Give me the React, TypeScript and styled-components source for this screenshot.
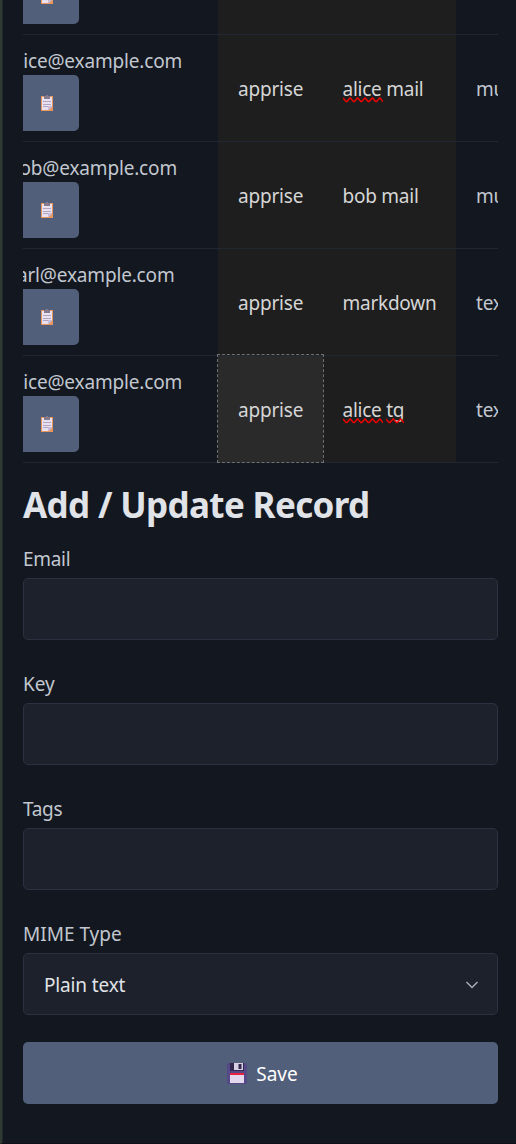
import React from "react";
import styled, { createGlobalStyle, css } from "styled-components";

const GlobalStyle = createGlobalStyle`
  * { box-sizing: border-box; }
  body {
    margin: 0;
    background: #13171f;
    color: #c2c7d0;
    font-family: "Noto Sans", "Open Sans", sans-serif;
    font-size: 19px;
    line-height: 30px;
    overflow: hidden;
  }
`;

const Page = styled.div`
  height: 1144px;
  overflow: hidden;
  border-left: 2px solid #2f3b30;
  border-bottom: 1px solid #11101a;
  box-shadow: inset 1px 0 0 #20282a;
  padding: 0 18px 0 21px;
`;

const TableScroller = styled.div`
  height: 463px;
  overflow: hidden;
  display: flex;
  flex-direction: column;
  justify-content: flex-end;
`;

const Table = styled.div`
  width: 620px;
  margin-left: -35px;
  border-bottom: 1px solid #202632;
`;

const Row = styled.div`
  display: grid;
  grid-template-columns: 230px 105px 133px 152px;
  height: 107px;
`;

const cellBase = css`
  border-top: 1px solid #202632;
  padding: 11px 20px 9px;
  white-space: nowrap;
  letter-spacing: -0.2px;
`;

const EmailCell = styled.div`
  ${cellBase}
`;

const EmailText = styled.div`
  height: 29px;
  letter-spacing: -0.17px;
`;

const Cell = styled.div<{ $editable?: boolean; $hover?: boolean }>`
  ${cellBase}
  display: flex;
  align-items: center;
  ${(p) => p.$editable && css`background: #1e1e1e; color: #d6d6d6;`}
  ${(p) =>
    p.$hover &&
    css`
      background: #2a2a2a;
      outline: 1px dashed #707070;
      z-index: 1;
    `}
`;

const TagText = styled.span`
  margin-left: -0.5px;
  letter-spacing: -0.25px;
`;

const CopyButton = styled.button`
  display: flex;
  align-items: center;
  justify-content: center;
  width: 71px;
  height: 56px;
  padding: 0 0 0 7px;
  border: 0;
  border-radius: 5px;
  background: #525f7a;
`;

const Misspelled = styled.span`
  position: relative;
`;

const Squiggle = styled.svg`
  position: absolute;
  left: 0;
  top: 21px;
  overflow: hidden;
`;

const Heading = styled.h2`
  margin: 20px 0 17px;
  color: #e0e3e7;
  font-size: 35px;
  font-weight: 700;
  line-height: 44px;
  letter-spacing: -0.65px;
  white-space: nowrap;
`;

const Field = styled.label<{ $tracking?: number }>`
  display: block;
  height: 125px;
  letter-spacing: ${(p) => p.$tracking ?? 0}px;
`;

const controlBox = css`
  width: 100%;
  height: 62px;
  margin-top: 4px;
  border: 1px solid #2a3140;
  border-radius: 5px;
  background: #1c212c;
`;

const Input = styled.input`
  ${controlBox}
  display: block;
  padding: 0 20px;
  color: #e0e3e7;
  font: inherit;
`;

const Select = styled.div`
  ${controlBox}
  display: flex;
  align-items: center;
  justify-content: space-between;
  padding: 2px 18px 0 20px;
  color: #e0e3e7;
  letter-spacing: -0.15px;

  svg {
    margin-bottom: 1px;
  }
`;

const SaveButton = styled.button`
  display: flex;
  align-items: center;
  justify-content: center;
  gap: 9px;
  width: 100%;
  height: 62px;
  margin-top: -2px;
  padding: 2px 0 0 4px;
  border: 0;
  border-radius: 5px;
  background: #525f7a;
  color: #fff;
  font: inherit;

  svg {
    margin-bottom: 1px;
  }
`;

const Clipboard = () => (
  <svg width="12" height="16" viewBox="0 0 12 16">
    <path d="M0 1h12v15H0z" fill="#e8965c" />
    <path d="M1 2h10v9l-4 4H1z" fill="#e9e1f2" />
    <path d="M11 11v1l-3 3H7v-4z" fill="#c9bcd8" />
    <path d="M3 1h2V0h2v1h2v3H3z" fill="#857c8f" />
    <path d="M2 6.500h8M2 9.500h8M2 11.500h5" stroke="#b0a5bf" />
  </svg>
);

const Floppy = () => (
  <svg width="20" height="21" viewBox="0 0 20 21">
    <path d="M1 0h17.500l1.500 1.500V20l-1 1H1l-1-1V1z" fill="#544887" />
    <path d="M3 0h14v8H3z" fill="#32284f" />
    <path d="M7 0h9v7H7z" fill="#d8cee4" />
    <path d="M11.500 1h3v5h-3z" fill="#32284f" />
    <path d="M3 10h14v10H3z" fill="#e3d8ee" />
    <path d="M3 10h14v2H3z" fill="#e9203f" />
  </svg>
);

const Wave = ({ width }: { width: number }) => (
  <Squiggle width={width} height="6" viewBox={`0 0 ${width} 6`}>
    <path
      d={"M0 1" + "l3 3.500h1l3 -3.500h.4".repeat(7)}
      fill="none"
      stroke="#f00000"
      strokeWidth="1.400"
    />
  </Squiggle>
);

type Word = { text: string; wave?: number };
type RecordRow = { email: string; tags: Word[]; mime: string };

const rows: RecordRow[] = [
  { email: "alice@example.com", tags: [], mime: "" },
  { email: "alice@example.com", tags: [{ text: "alice", wave: 40 }, { text: " mail" }], mime: "multipart" },
  { email: "bob@example.com", tags: [{ text: "bob mail" }], mime: "multipart" },
  { email: "carl@example.com", tags: [{ text: "markdown" }], mime: "text/markdown" },
  { email: "alice@example.com", tags: [{ text: "alice", wave: 40 }, { text: " " }, { text: "tg", wave: 18 }], mime: "text/plain" },
];

export default function App() {
  return (
    <>
      <GlobalStyle />
      <Page>
        <TableScroller>
          <Table>
            {rows.map((row, i) => (
              <Row key={i}>
                <EmailCell>
                  <EmailText>{row.email}</EmailText>
                  <CopyButton aria-label="Copy">
                    <Clipboard />
                  </CopyButton>
                </EmailCell>
                <Cell $editable $hover={i === rows.length - 1}>
                  {i > 0 && "apprise"}
                </Cell>
                <Cell $editable>
                  <TagText>
                    {row.tags.map((word, j) =>
                      word.wave ? (
                        <Misspelled key={j}>
                          {word.text}
                          <Wave width={word.wave} />
                        </Misspelled>
                      ) : (
                        word.text
                      )
                    )}
                  </TagText>
                </Cell>
                <Cell>{row.mime}</Cell>
              </Row>
            ))}
          </Table>
        </TableScroller>
        <Heading>Add / Update Record</Heading>
        <Field $tracking={-0.3}>
          Email
          <Input />
        </Field>
        <Field>
          Key
          <Input />
        </Field>
        <Field $tracking={-0.3}>
          Tags
          <Input />
        </Field>
        <Field as="div">
          MIME Type
          <Select>
            Plain text
            <svg width="14" height="8" viewBox="0 0 14 8">
              <path d="M1.500 1l5.500 5.500L12.500 1" fill="none" stroke="#a4acba" strokeWidth="1.500" />
            </svg>
          </Select>
        </Field>
        <SaveButton>
          <Floppy />
          Save
        </SaveButton>
      </Page>
    </>
  );
}
